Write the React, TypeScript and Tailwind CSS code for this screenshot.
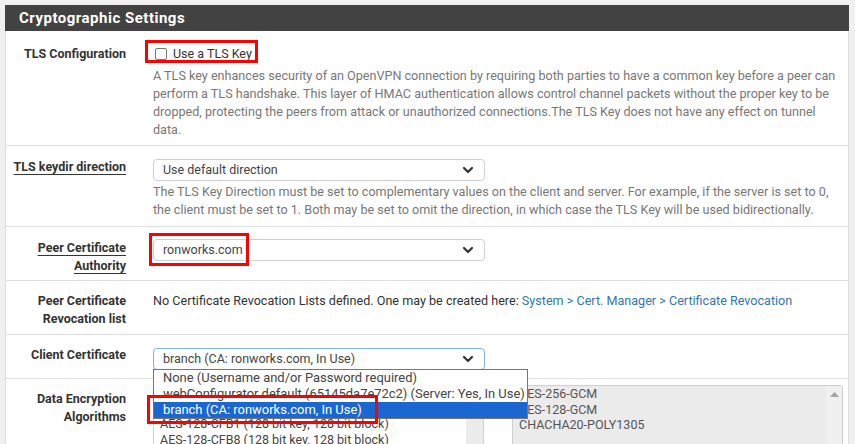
import React from "react";

const Chevron = () => (
  <svg width="12" height="8" viewBox="0 0 12 8" className="shrink-0">
    <path d="M2 2 L6 6 L10 2" fill="none" stroke="#333" strokeWidth="2.2" strokeLinecap="round" strokeLinejoin="round" />
  </svg>
);

function Select({ value, focus }: { value: string; focus?: boolean }) {
  return (
    <div
      className={`flex h-[22px] w-[332px] items-center justify-between rounded-[4px] border bg-white pl-[9px] pr-[10px] text-[12.5px] text-[#444] ${
        focus ? "border-[#7fb0e6]" : "border-[#cfcfcf]"
      }`}
    >
      <span className="leading-none">{value}</span>
      <Chevron />
    </div>
  );
}

function Row({
  label,
  underline,
  children,
  className,
  labelClass,
}: {
  label: React.ReactNode;
  underline?: boolean;
  children: React.ReactNode;
  className?: string;
  labelClass?: string;
}) {
  return (
    <div className={`flex border-b border-[#dedede] ${className ?? ""}`}>
      <div className={`w-[132px] shrink-0 pr-[12px] text-right text-[12.5px] font-bold leading-[18px] text-[#333] ${labelClass ?? ""}`}>
        <span className={underline ? "underline decoration-1 underline-offset-[3px]" : ""}>{label}</span>
      </div>
      <div className="flex-1 pl-[15px] pr-[8px]">{children}</div>
    </div>
  );
}

const help = "text-[12.6px] leading-[18px] text-[#777]";

export default function App() {
  return (
    <div
      className="relative h-[444px] w-[855px] overflow-hidden bg-[#f0f0f0] pl-[5px] pr-[6px] pt-[5px]"
      style={{ fontFamily: "Roboto, 'Liberation Sans', sans-serif" }}
    >
      <div className="h-[450px] border border-[#dedede] bg-white">
        <div className="-mx-px -mt-px flex h-[26px] items-center bg-[#424242] pl-[14px] text-[15px] font-bold tracking-[0.5px] text-white">
          Cryptographic Settings
        </div>

        <Row label="TLS Configuration" className="h-[115px] pt-[14px]">
          <div className="flex h-[18px] items-center gap-[6px] pl-[2px] text-[12.5px] text-[#333]">
            <span className="inline-block h-[12px] w-[12px] rounded-[2px] border border-[#767676] bg-white" />
            <span>Use a TLS Key</span>
          </div>
          <p className={`${help} mt-[4px]`}>
            A TLS key enhances security of an OpenVPN connection by requiring both parties to have a common key before a peer can perform a TLS handshake. This layer of HMAC authentication allows control channel packets without the proper key to be dropped, protecting the peers from attack or unauthorized connections.The TLS Key does not have any effect on tunnel data.
          </p>
        </Row>

        <Row label="TLS keydir direction" underline className="h-[81px] pt-[13px]" labelClass="-mt-[1px]">
          <Select value="Use default direction" />
          <p className={`${help} mt-[2px]`}>
            The TLS Key Direction must be set to complementary values on the client and server. For example, if the server is set to 0, the client must be set to 1. Both may be set to omit the direction, in which case the TLS Key will be used bidirectionally.
          </p>
        </Row>

        <Row
          label={
            <>
              <span className="underline decoration-1 underline-offset-[3px]">Peer Certificate</span>
              <br />
              <span className="underline decoration-1 underline-offset-[3px]">Authority</span>
            </>
          }
          className="h-[54px] pt-[12px]"
        >
          <Select value="ronworks.com" />
        </Row>

        <Row
          label={
            <>
              Peer Certificate
              <br />
              Revocation list
            </>
          }
          className="h-[54px] pt-[11px]"
        >
          <p className="text-[12.6px] leading-[18px] text-[#333]">
            No Certificate Revocation Lists defined. One may be created here:{" "}
            <span className="text-[#3276b1]">System &gt; Cert. Manager &gt; Certificate Revocation</span>
          </p>
        </Row>

        <Row label="Client Certificate" className="h-[44px] pt-[13px]" labelClass="-mt-[2px]">
          <Select value="branch (CA: ronworks.com, In Use)" focus />
        </Row>

        <Row
          label={
            <>
              Data Encryption
              <br />
              Algorithms
            </>
          }
          className="h-[80px] pt-[4px]"
          labelClass="pt-[7px]"
        >
          <div className="flex gap-[28px]">
            <div className="flex h-[70px] w-[331px] overflow-hidden border border-[#cfcfcf] bg-white">
              <div className="flex-1 pl-[6px] text-[12.5px] leading-[16px] text-[#444]">
                <div>AES-128-CBC (128 bit key, 128 bit block)</div>
                <div>AES-128-CFB (128 bit key, 128 bit block)</div>
                <div>AES-128-CFB1 (128 bit key, 128 bit block)</div>
                <div>AES-128-CFB8 (128 bit key, 128 bit block)</div>
              </div>
              <div className="w-[17px] bg-[#ececec]" />
            </div>
            <div className="mt-[2px] flex h-[70px] w-[331px] overflow-hidden rounded-[3px] border border-[#cfcfcf] bg-[#ebebeb]">
              <div className="flex-1 pl-[6px] text-[12.5px] leading-[15.5px] text-[#555]">
                <div>AES-256-GCM</div>
                <div>AES-128-GCM</div>
                <div>CHACHA20-POLY1305</div>
              </div>
              <div className="flex w-[16px] justify-center bg-[#f0f0f0] pt-[6px]">
                <svg width="9" height="5" viewBox="0 0 9 5">
                  <path d="M0 5 L4.5 0 L9 5 Z" fill="#a3a3a3" />
                </svg>
              </div>
            </div>
          </div>
        </Row>
      </div>

      {/* open dropdown list */}
      <div className="absolute left-[153px] top-[369px] w-[375px] border border-[#767676] bg-white text-[12.95px] text-[#444]">
        <div className="h-[16px] pl-[9px] leading-[16px]">None (Username and/or Password required)</div>
        <div className="h-[16px] pl-[9px] leading-[16px]">webConfigurator default (65145da7e72c2) (Server: Yes, In Use)</div>
        <div className="h-[16px] bg-[#1a67d2] pl-[9px] leading-[16px] text-white">branch (CA: ronworks.com, In Use)</div>
      </div>

      {/* red annotation boxes */}
      <div className="pointer-events-none absolute left-[145px] top-[40px] h-[23px] w-[113px] border-[3px] border-[#f00]" />
      <div className="pointer-events-none absolute left-[149px] top-[233px] h-[33px] w-[100px] border-[3px] border-[#f00]" />
      <div className="pointer-events-none absolute left-[147px] top-[395px] h-[29px] w-[231px] border-[3px] border-[#f00]" />
    </div>
  );
}
